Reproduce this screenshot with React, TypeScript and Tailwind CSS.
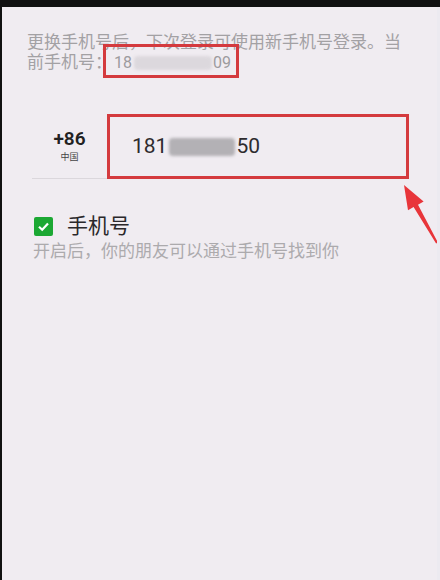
const font = "font-['Roboto','Noto_Sans_CJK_SC',sans-serif]";

function Blur({ className }: { className: string }) {
  return <span className={`inline-block rounded-sm blur-[1.5px] ${className}`} />;
}

export default function App() {
  return (
    <div className={`flex h-[580px] w-[440px] flex-col bg-[#111] ${font}`}>
      <div className="h-[7px] shrink-0" />
      <div className="flex flex-1">
        <div className="w-[2px] shrink-0" />
        <div className="relative flex-1 bg-[#f0ecf1]">
          <p className="w-[400px] pl-[25px] pt-[25px] text-[17px] leading-[20px] text-[#a3a1a4]">
            更换手机号后，下次登录可使用新手机号登录。当
            <br />
            前手机号：
            <span className="relative -ml-[6px] inline-flex items-center pl-[8px] text-[16px] text-[#9d9b9e]">
              18
              <Blur className="ml-[2px] h-[14px] w-[78px] bg-[#dcd8dd]" />
              <span className="ml-[1px]">09</span>
              <span className="absolute left-[-3px] top-[-9px] h-[34px] w-[136px] border-[3px] border-[#d43a3e]" />
            </span>
          </p>

          <div className="mt-[41px] flex items-stretch pl-[30px]">
            <div className="flex w-[75px] flex-col items-center justify-center border-b border-[#dbd7dc] pb-[2px]">
              <span className="text-[19px] font-semibold leading-[22px] text-[#222]">+86</span>
              <span className="mt-[2px] text-[9px] leading-[10px] text-[#444]">中国</span>
            </div>
            <div className="flex h-[65px] w-[302px] items-center border-[3px] border-[#d43a3e] pl-[22px] text-[21px] text-[#2d2b2e]">
              181
              <Blur className="ml-[2px] h-[18px] w-[66px] bg-[#b3b1b5]" />
              <span className="ml-[1px]">50</span>
            </div>
          </div>

          <div className="mt-[35px] flex items-center gap-[14px] pl-[32px]">
            <span className="flex h-[19px] w-[19px] items-center justify-center rounded-[2px] bg-[#1ca833]">
              <svg width="13" height="13" viewBox="0 0 13 13">
                <path d="M2 6.8 L5.2 9.8 L11 3.4" fill="none" stroke="#fff" strokeWidth="2.2" />
              </svg>
            </span>
            <span className="text-[21px] leading-[24px] text-[#2a282b]">手机号</span>
          </div>
          <p className="mt-[3px] pl-[31px] text-[17px] leading-[20px] text-[#acaaad]">
            开启后，你的朋友可以通过手机号找到你
          </p>

          <svg className="absolute left-[396px] top-[174px]" width="44" height="68" viewBox="0 0 44 68">
            <path
              d="M6 4 L10 29.3 L15.6 26.1 L38.1 62.5 L39.9 61.5 L20 23.7 L25.6 20.5 Z"
              fill="#e8353a"
            />
          </svg>
          <div className="absolute right-0 top-0 h-full w-[3px] bg-[#eceaf0]" />
        </div>
      </div>
    </div>
  );
}
